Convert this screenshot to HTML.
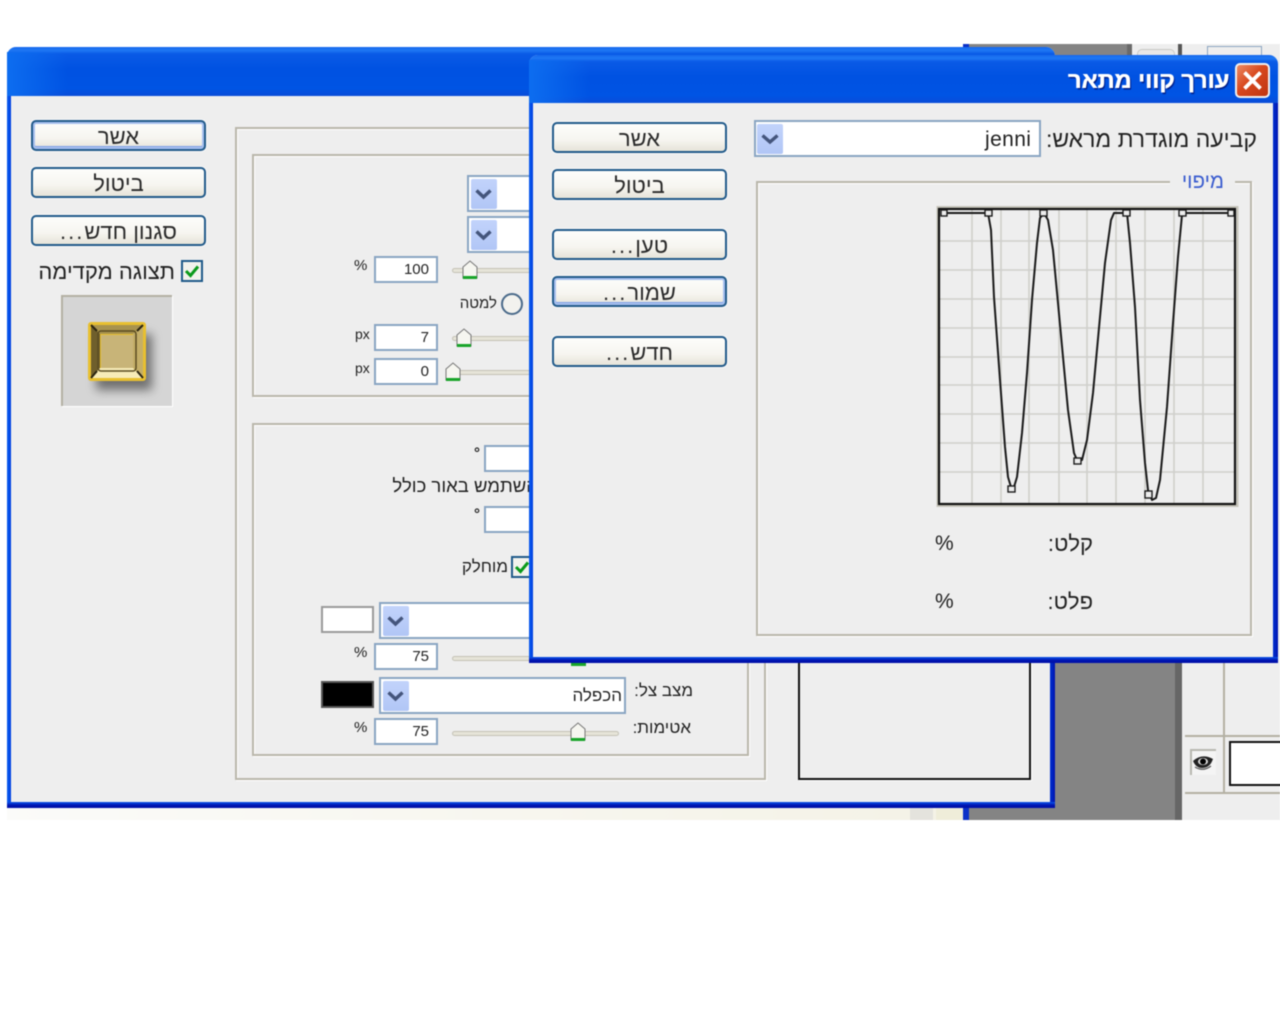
<!DOCTYPE html>
<html lang="he">
<head>
<meta charset="utf-8">
<title>עורך קווי מתאר</title>
<style>
html,body{margin:0;padding:0;background:#fff;}
body{width:1280px;height:1024px;overflow:hidden;position:relative;font-family:"Liberation Sans","Noto Sans CJK JP",sans-serif;color:#222;}
#s{position:absolute;left:0;top:0;width:1280px;height:1024px;filter:blur(.45px);}
.a{position:absolute;box-sizing:border-box;}
.t{position:absolute;white-space:nowrap;line-height:1;}
.win{position:absolute;box-sizing:border-box;background:#eeeeee;border-radius:9px 9px 0 0;}
.title{position:absolute;left:0;right:0;top:0;border-radius:9px 9px 0 0;background:linear-gradient(180deg,#1668ee 0,#1f78f4 7%,#0a5ae6 14%,#0052e2 45%,#0054e4 85%,#0a4cd8 100%);}
.bl{position:absolute;background:linear-gradient(90deg,#0a5cf0,#0040e0);}
.bb{position:absolute;background:linear-gradient(180deg,#0a55ea 0,#0014b0 55%,#0010a8 100%);}
.br{position:absolute;background:linear-gradient(90deg,#0030d0,#0014b0);}
.btn{position:absolute;box-sizing:border-box;height:31px;border:2px solid #215a8a;border-radius:5px;background:linear-gradient(180deg,#fdfdfb 0,#f6f5f0 60%,#e6e3d8 100%);font-size:22px;line-height:30px;text-align:center;color:#2a2a2a;box-shadow:0 0 0 1px #f8f8f8;}
.btn.f{box-shadow:inset 0 0 0 2px #a7c0ee,inset 0 -1px 0 2px #7fa0e6,0 0 0 1px #f8f8f8;}
.btn span{letter-spacing:2px;}
.grp{position:absolute;box-sizing:border-box;border:2px solid #bab7ab;box-shadow:1px 1px 0 #fff,inset 1px 1px 0 #fff;}
.inp{position:absolute;box-sizing:border-box;height:27px;background:#fff;border:2px solid #8aa5c2;font-size:15px;line-height:24px;text-align:right;padding-right:7px;color:#222;}
.sel{position:absolute;box-sizing:border-box;height:37px;background:#fff;border:2px solid #8aa5c2;}
.arr{position:absolute;left:2px;top:2px;width:26px;height:30px;border-radius:2px;background:linear-gradient(180deg,#c2d3fb,#b1c6f6);}
.arr svg{position:absolute;left:0;top:0;}
.sl{position:absolute;height:3px;background:#e6e4d8;border:1px solid #c4c2b6;border-radius:3px;box-sizing:content-box;}
.chk{position:absolute;box-sizing:border-box;width:22px;height:22px;background:#f2f2ec;border:2px solid #1f5a8a;}
svg{position:absolute;overflow:visible;}
</style>
</head>
<body>
<div id="s">

<!-- background application -->
<div class="a" style="left:963px;top:44px;width:317px;height:776px;background:#eeeeee;"></div>
<div class="a" style="left:969px;top:44px;width:158px;height:776px;background:#848484;"></div>
<div class="a" style="left:1054px;top:100px;width:121px;height:720px;background:#848484;"></div>
<div class="a" style="left:1127px;top:44px;width:5px;height:20px;background:#6a6a6a;"></div>
<div class="a" style="left:1132px;top:44px;width:46px;height:20px;background:#eeeeee;"></div>
<div class="a" style="left:1137px;top:49px;width:38px;height:15px;border:1px solid #c8c8c4;border-radius:5px 5px 0 0;background:#e8e8e6;"></div>
<div class="a" style="left:1178px;top:44px;width:4px;height:20px;background:#555;"></div>
<div class="a" style="left:1207px;top:46px;width:55px;height:18px;border:1px solid #8aa5c2;"></div>
<div class="a" style="left:1175px;top:660px;width:7px;height:160px;background:#666;"></div>
<div class="a" style="left:1182px;top:660px;width:98px;height:160px;background:#eeeeee;"></div>
<div class="a" style="left:1223px;top:660px;width:2px;height:133px;background:#b3b0a3;"></div>
<div class="a" style="left:1185px;top:735px;width:95px;height:2px;background:#b3b0a3;"></div>
<div class="a" style="left:1185px;top:792px;width:95px;height:2px;background:#b3b0a3;"></div>
<div class="a" style="left:1190px;top:749px;width:26px;height:26px;background:#f4f4f4;border-top:2px solid #b8b8b0;border-left:2px solid #b8b8b0;"></div>
<svg style="left:1190px;top:749px;" width="26" height="26" viewBox="0 0 26 26">
<path d="M3 12 Q12 4 23 10 Q20 19 12 19 Q6 19 3 12Z" fill="#222"/>
<ellipse cx="13" cy="12.5" rx="5" ry="3.5" fill="#ddd"/>
<circle cx="13" cy="12.5" r="3" fill="#000"/>
<path d="M5 18 Q13 23 21 17" fill="none" stroke="#555" stroke-width="1.2"/>
</svg>
<div class="a" style="left:1229px;top:741px;width:60px;height:45px;background:#fff;border:2px solid #111;"></div>
<div class="a" style="left:7px;top:808px;width:956px;height:12px;background:linear-gradient(90deg,#fbfbf9,#f4f2e6);"></div>
<div class="a" style="left:910px;top:808px;width:23px;height:12px;background:#e4e3dd;"></div>
<div class="a" style="left:936px;top:808px;width:27px;height:12px;background:#efedd9;"></div>
<div class="a" style="left:963px;top:44px;width:6px;height:10px;background:#0a30c8;"></div>
<div class="a" style="left:963px;top:808px;width:6px;height:12px;background:#0a30c8;"></div>

<!-- back window -->
<div class="win" style="left:7px;top:47px;width:1048px;height:761px;">
  <div class="title" style="height:49px;"></div>
  <div class="a" style="left:0;top:5px;width:60px;height:44px;background:linear-gradient(90deg,#0d6df0,rgba(13,100,240,0));"></div>
  <div class="bl" style="left:0;top:49px;width:4px;height:712px;"></div>
  <div class="br" style="right:0;top:49px;width:5px;height:712px;"></div>
  <div class="bb" style="left:0;right:0;bottom:0;height:6px;"></div>
</div>

<div class="btn f" style="left:31px;top:120px;width:175px;">אשר</div>
<div class="btn" style="left:31px;top:167px;width:175px;">ביטול</div>
<div class="btn" style="left:31px;top:215px;width:175px;" dir="rtl">סגנון חדש<span>...</span></div>
<div class="chk" style="left:181px;top:260px;"></div>
<svg style="left:181px;top:260px;" width="22" height="22" viewBox="0 0 22 22"><path d="M5 11 L9.5 15.5 L17 6.5" fill="none" stroke="#0a9a1a" stroke-width="3"/></svg>
<div class="t" dir="rtl" style="left:35px;top:261px;width:140px;font-size:22px;">תצוגה מקדימה</div>

<div class="a" style="left:61px;top:295px;width:111px;height:111px;background:#d5d5d5;border-top:2px solid #b3b0a3;border-left:2px solid #b3b0a3;box-shadow:1px 1px 0 #fff;"></div>
<div class="a" style="left:96px;top:334px;width:56px;height:56px;background:#444;filter:blur(5px);opacity:.7;"></div>
<svg style="left:88px;top:322px;" width="58" height="59" viewBox="0 0 58 59">
<rect x="0" y="0" width="58" height="59" rx="3" fill="#e8c030"/>
<polygon points="3,3 55,3 45,12 12,12" fill="#a8934e"/>
<polygon points="3,3 12,12 12,46 3,56" fill="#6f5f2c"/>
<polygon points="55,3 45,12 45,46 55,56" fill="#c4ae68"/>
<polygon points="3,56 12,46 45,46 55,56" fill="#f7ecb8"/>
<rect x="10" y="9" width="38" height="40" rx="3" fill="none" stroke="#5a4c22" stroke-width="1.500"/>
<rect x="13" y="13" width="32" height="33" fill="#c8b478"/>
<path d="M3 3 L9 9 M55 3 L49 9 M3 56 L9 49 M55 56 L49 49" stroke="#2a2410" stroke-width="2"/>
</svg>

<!-- back window groups -->
<div class="grp" style="left:235px;top:127px;width:531px;height:653px;"></div>
<div class="grp" style="left:252px;top:154px;width:400px;height:243px;"></div>
<div class="grp" style="left:252px;top:423px;width:497px;height:333px;"></div>

<div class="sel" style="left:467px;top:175px;width:120px;"><div class="arr" style="left:2px;"><svg width="26" height="30" viewBox="0 0 26 30"><path d="M5.500 11.500 L12.500 18 L19.500 11.500" fill="none" stroke="#44557c" stroke-width="3.400"/></svg></div></div>
<div class="sel" style="left:467px;top:216px;width:120px;"><div class="arr" style="left:2px;"><svg width="26" height="30" viewBox="0 0 26 30"><path d="M5.500 11.500 L12.500 18 L19.500 11.500" fill="none" stroke="#44557c" stroke-width="3.400"/></svg></div></div>

<div class="t" style="left:354px;top:258px;font-size:15px;">%</div>
<div class="inp" style="left:374px;top:256px;width:64px;">100</div>
<div class="sl" style="left:452px;top:268px;width:90px;"></div>
<svg style="left:462px;top:260px;" width="16" height="20" viewBox="0 0 16 20"><path d="M1 7 L8 1 L15 7 V18 H1Z" fill="#f6f6f0" stroke="#777" stroke-width="1"/><rect x="1" y="16" width="14" height="3" fill="#19a52a"/></svg>
<div class="a" style="left:501px;top:293px;width:22px;height:22px;border-radius:50%;border:2px solid #4a6a8a;background:#f2f2ee;"></div>
<div class="t" dir="rtl" style="left:455px;top:296px;width:42px;font-size:15px;">למטה</div>
<div class="t" style="left:355px;top:327px;font-size:14px;">px</div>
<div class="inp" style="left:374px;top:324px;width:64px;">7</div>
<div class="sl" style="left:452px;top:336px;width:90px;"></div>
<svg style="left:456px;top:328px;" width="16" height="20" viewBox="0 0 16 20"><path d="M1 7 L8 1 L15 7 V18 H1Z" fill="#f6f6f0" stroke="#777" stroke-width="1"/><rect x="1" y="16" width="14" height="3" fill="#19a52a"/></svg>
<div class="t" style="left:355px;top:361px;font-size:14px;">px</div>
<div class="inp" style="left:374px;top:358px;width:64px;">0</div>
<div class="sl" style="left:452px;top:370px;width:90px;"></div>
<svg style="left:445px;top:362px;" width="16" height="20" viewBox="0 0 16 20"><path d="M1 7 L8 1 L15 7 V18 H1Z" fill="#f6f6f0" stroke="#777" stroke-width="1"/><rect x="1" y="16" width="14" height="3" fill="#19a52a"/></svg>

<div class="t" style="left:474px;top:446px;font-size:15px;font-weight:bold;">°</div>
<div class="inp" style="left:484px;top:445px;width:64px;"></div>
<div class="t" dir="rtl" style="left:380px;top:477px;width:158px;font-size:18.500px;">השתמש באור כולל</div>
<div class="t" style="left:474px;top:507px;font-size:15px;font-weight:bold;">°</div>
<div class="inp" style="left:484px;top:506px;width:64px;"></div>
<div class="chk" style="left:511px;top:556px;"></div>
<svg style="left:511px;top:556px;" width="22" height="22" viewBox="0 0 22 22"><path d="M5 11 L9.500 15.500 L17 6.500" fill="none" stroke="#0a9a1a" stroke-width="3"/></svg>
<div class="t" dir="rtl" style="left:458px;top:558px;width:50px;font-size:17px;">מוחלק</div>

<div class="a" style="left:321px;top:606px;width:53px;height:27px;background:#fff;border:2px solid #9a9a9a;"></div>
<div class="sel" style="left:379px;top:602px;width:170px;"><div class="arr"><svg width="26" height="30" viewBox="0 0 26 30"><path d="M5.500 11.500 L12.500 18 L19.500 11.500" fill="none" stroke="#44557c" stroke-width="3.400"/></svg></div></div>
<div class="t" style="left:354px;top:645px;font-size:15px;">%</div>
<div class="inp" style="left:374px;top:643px;width:64px;">75</div>
<div class="sl" style="left:452px;top:656px;width:165px;"></div>
<div class="a" style="left:571px;top:660px;width:15px;height:6px;background:#19a52a;"></div>

<div class="a" style="left:321px;top:681px;width:53px;height:27px;background:#000;border:2px solid #555;"></div>
<div class="sel" style="left:379px;top:677px;width:247px;"><div class="arr"><svg width="26" height="30" viewBox="0 0 26 30"><path d="M5.500 11.500 L12.500 18 L19.500 11.500" fill="none" stroke="#44557c" stroke-width="3.400"/></svg></div><div class="t" dir="rtl" style="right:2px;top:8px;font-size:17px;">הכפלה</div></div>
<div class="t" dir="rtl" style="left:630px;top:682px;width:63px;font-size:17px;">מצב צל:</div>
<div class="t" style="left:354px;top:720px;font-size:15px;">%</div>
<div class="inp" style="left:374px;top:718px;width:64px;">75</div>
<div class="sl" style="left:452px;top:731px;width:165px;"></div>
<svg style="left:570px;top:722px;" width="16" height="20" viewBox="0 0 16 20"><path d="M1 7 L8 1 L15 7 V18 H1Z" fill="#f6f6f0" stroke="#777" stroke-width="1"/><rect x="1" y="16" width="14" height="3" fill="#19a52a"/></svg>
<div class="t" dir="rtl" style="left:630px;top:719px;width:61px;font-size:17px;">אטימות:</div>

<div class="a" style="left:798px;top:640px;width:233px;height:140px;border:2px solid #111;box-shadow:1px 1px 0 #fff;"></div>

<!-- front window -->
<div class="win" style="left:529px;top:55px;width:749px;height:608px;">
  <div class="title" style="height:48px;"></div>
  <div class="a" style="left:0;top:5px;width:60px;height:43px;background:linear-gradient(90deg,#0d6df0,rgba(13,100,240,0));"></div>
  <div class="bl" style="left:0;top:48px;width:4px;height:560px;"></div>
  <div class="br" style="right:0;top:48px;width:5px;height:560px;"></div>
  <div class="bb" style="left:0;right:0;bottom:0;height:6px;"></div>
</div>
<div class="t" dir="rtl" style="left:1064px;top:69px;width:165px;font-size:23.500px;font-weight:bold;color:#fff;text-shadow:.6px 0 0 #fff,1.500px 1.500px 1px #001a80;">עורך קווי מתאר</div>
<div class="a" style="left:1235px;top:63px;width:35px;height:35px;border-radius:5px;border:2px solid #f0f0f0;background:linear-gradient(135deg,#ec8a64,#d8481e 45%,#bf3410);"></div>
<svg style="left:1235px;top:63px;" width="35" height="35" viewBox="0 0 35 35"><path d="M9.500 9.500 L25.500 25.500 M25.500 9.500 L9.500 25.500" stroke="#fff" stroke-width="3.800" fill="none"/></svg>

<div class="btn" style="left:552px;top:122px;width:175px;">אשר</div>
<div class="btn" style="left:552px;top:169px;width:175px;">ביטול</div>
<div class="btn" style="left:552px;top:229px;width:175px;" dir="rtl">טען<span>...</span></div>
<div class="btn f" style="left:552px;top:276px;width:175px;" dir="rtl">שמור<span>...</span></div>
<div class="btn" style="left:552px;top:336px;width:175px;" dir="rtl">חדש<span>...</span></div>

<div class="a" style="left:754px;top:120px;width:287px;height:37px;background:#fff;border:2px solid #8aa5c2;"></div>
<div class="arr" style="left:757px;top:124px;"><svg width="26" height="30" viewBox="0 0 26 30"><path d="M5.500 11.500 L13 18 L20.500 11.500" fill="none" stroke="#44557c" stroke-width="3.400"/></svg></div>
<div class="t" style="left:985px;top:129px;font-size:21px;letter-spacing:.4px;">jenni</div>
<div class="t" dir="rtl" style="left:1040px;top:128px;width:217px;font-size:23px;">קביעה מוגדרת מראש:</div>

<div class="grp" style="left:756px;top:181px;width:496px;height:455px;"></div>
<div class="a" style="left:1170px;top:172px;width:65px;height:18px;background:#eeeeee;"></div>
<div class="t" dir="rtl" style="left:1176px;top:172px;width:48px;font-size:20.500px;color:#3a5ccf;">מיפוי</div>

<!-- graph -->
<svg style="left:936px;top:205px;" width="304" height="304" viewBox="936 205 304 304">
<rect x="937.500" y="207" width="300" height="299" fill="none" stroke="#c6c4ba" stroke-width="2"/>
<rect x="939" y="209" width="296" height="295" fill="#eeeeee"/>
<g stroke="#cfcfcb" stroke-width="1.600">
<path d="M972 209V504M1001 209V504M1029 209V504M1059 209V504M1087 209V504M1116 209V504M1145 209V504M1174 209V504M1203 209V504"/>
<path d="M939 241H1235M939 270H1235M939 299H1235M939 328H1235M939 357H1235M939 385H1235M939 414H1235M939 443H1235M939 472H1235"/>
</g>
<rect x="939" y="209" width="296" height="295" fill="none" stroke="#111" stroke-width="2.200"/>
<path d="M943 213 L988 213 L991 230 L994 297 L1000 380 L1005 447 L1008 477 L1011 487 L1014 487 L1017 477 L1022 433 L1027 373 L1032 300 L1037 243 L1040 218 L1044 213 L1048 220 L1053 250 L1058 303 L1063 357 L1068 410 L1074 453 L1077 460 L1082 460 L1087 440 L1093 393 L1100 317 L1105 263 L1111 220 L1114 213 L1127 213 L1130 243 L1135 307 L1140 400 L1145 463 L1148 490 L1152 500 L1156 498 L1160 480 L1167 407 L1173 323 L1178 257 L1182 215 L1183 213 L1232 213" fill="none" stroke="#1a1a1a" stroke-width="2" stroke-linejoin="round"/>
<g fill="#eee" stroke="#1a1a1a" stroke-width="1.400">
<rect x="941" y="210" width="6" height="6"/><rect x="985" y="210" width="7" height="6"/><rect x="1040" y="210" width="7" height="6"/><rect x="1123" y="210" width="7" height="6"/><rect x="1179" y="210" width="7" height="6"/><rect x="1228" y="210" width="6" height="6"/><rect x="1008" y="486" width="7" height="6"/><rect x="1074" y="458" width="7" height="6"/><rect x="1145" y="491" width="7" height="7"/>
</g>
</svg>

<div class="t" dir="rtl" style="left:1044px;top:533px;width:49px;font-size:22px;">קלט:</div>
<div class="t" style="left:935px;top:533px;font-size:21px;">%</div>
<div class="t" dir="rtl" style="left:1044px;top:591px;width:49px;font-size:22px;">פלט:</div>
<div class="t" style="left:935px;top:591px;font-size:21px;">%</div>

</div>
</body>
</html>
